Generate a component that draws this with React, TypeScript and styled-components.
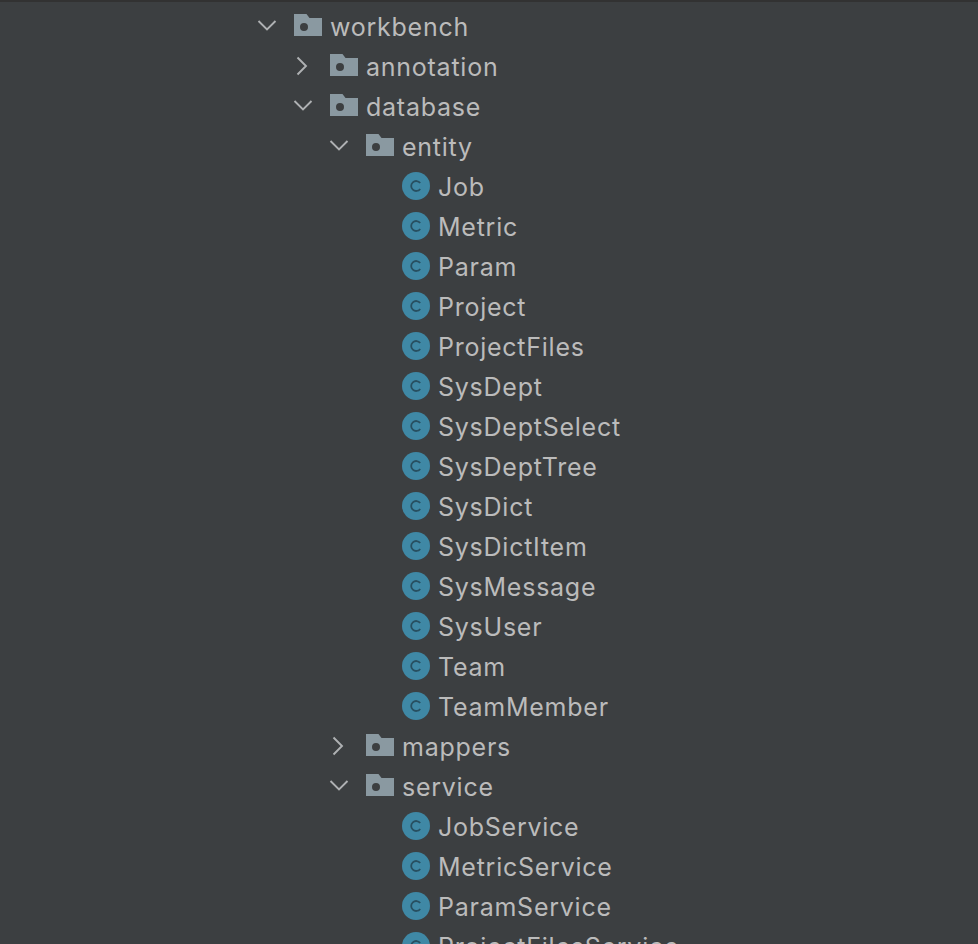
import React from "react";
import styled, { createGlobalStyle } from "styled-components";

type Node = {
  name: string;
  kind: "folder" | "class";
  depth: number;
  open?: boolean;
};

const classes = (names: string[], depth: number): Node[] =>
  names.map((name) => ({ name, kind: "class", depth }));

const tree: Node[] = [
  { name: "workbench", kind: "folder", depth: 0, open: true },
  { name: "annotation", kind: "folder", depth: 1, open: false },
  { name: "database", kind: "folder", depth: 1, open: true },
  { name: "entity", kind: "folder", depth: 2, open: true },
  ...classes(
    [
      "Job",
      "Metric",
      "Param",
      "Project",
      "ProjectFiles",
      "SysDept",
      "SysDeptSelect",
      "SysDeptTree",
      "SysDict",
      "SysDictItem",
      "SysMessage",
      "SysUser",
      "Team",
      "TeamMember",
    ],
    3
  ),
  { name: "mappers", kind: "folder", depth: 2, open: false },
  { name: "service", kind: "folder", depth: 2, open: true },
  ...classes(
    ["JobService", "MetricService", "ParamService", "ProjectFilesService"],
    3
  ),
];

function Chevron({ open }: { open: boolean }) {
  return (
    <svg width="18" height="18" viewBox="0 0 18 18" fill="none" overflow="visible">
      <path
        d={open ? "M0.5 3L9 11.5L17.5 3" : "M3.5 -0.5L12 8L3.5 16.5"}
        stroke="#afb1b3"
        strokeWidth="1.9"
      />
    </svg>
  );
}

function FolderIcon() {
  return (
    <svg width="28" height="22" viewBox="0 0 28 22">
      <path
        fillRule="evenodd"
        fill="#8a99a1"
        d="M0 0H12.5L15.5 4H28V22H0ZM10 9a4 4 0 1 0 0 8a4 4 0 1 0 0-8Z"
      />
    </svg>
  );
}

function ClassIcon() {
  return (
    <svg width="28" height="28" viewBox="0 0 28 28">
      <circle cx="14" cy="14" r="14" fill="#3f88a5" />
      <path
        d="M18.2 11A5 5 0 1 0 18.2 17"
        fill="none"
        stroke="#274f60"
        strokeWidth="1.8"
      />
    </svg>
  );
}

export default function App() {
  return (
    <>
      <GlobalStyle />
      <StyledPanel>
        {tree.map(({ name, kind, depth, open }) => (
          <StyledRow key={name} $depth={depth}>
            <StyledArrow>
              {open !== undefined && <Chevron open={open} />}
            </StyledArrow>
            <StyledIcon $lift={kind === "folder" ? 4 : 2}>
              {kind === "folder" ? <FolderIcon /> : <ClassIcon />}
            </StyledIcon>
            <StyledName>{name}</StyledName>
          </StyledRow>
        ))}
      </StyledPanel>
    </>
  );
}

const GlobalStyle = createGlobalStyle`
  html, body {
    margin: 0;
    padding: 0;
    height: 100%;
    overflow: hidden;
    background: #3c3f41;
  }
`;

const StyledPanel = styled.div`
  width: 978px;
  height: 944px;
  box-sizing: border-box;
  overflow: hidden;
  padding-top: 5px;
  background: #3c3f41;
  border-top: 2px solid #323232;
  font-family: Inter, "Liberation Sans", sans-serif;
`;

const StyledRow = styled.div<{ $depth: number }>`
  display: flex;
  align-items: center;
  height: 40px;
  padding-left: ${({ $depth }) => 258 + $depth * 36}px;
`;

const StyledArrow = styled.div`
  display: flex;
  align-items: center;
  justify-content: center;
  flex: none;
  width: 18px;
  height: 18px;
  margin-right: 18px;
`;

const StyledIcon = styled.div<{ $lift: number }>`
  display: flex;
  align-items: center;
  flex: none;
  width: 28px;
  margin-right: 8px;
  margin-bottom: ${({ $lift }) => $lift}px;
`;

const StyledName = styled.span`
  font-size: 25px;
  letter-spacing: 0.75px;
  line-height: 40px;
  color: #bbbbbb;
  white-space: nowrap;
`;
